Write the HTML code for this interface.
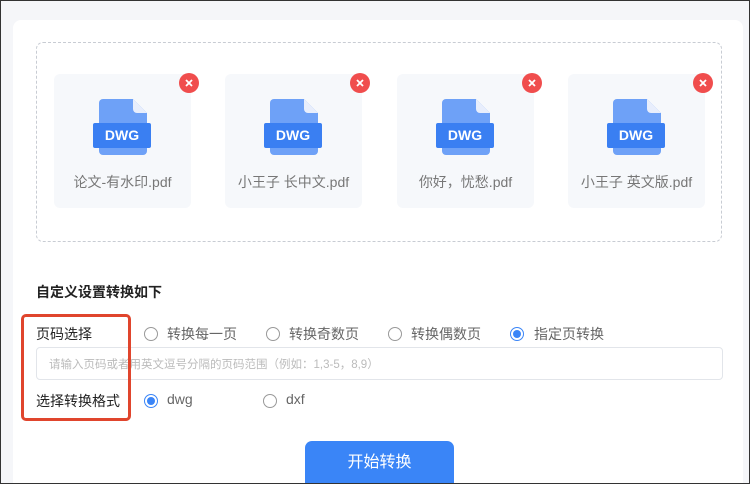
<html><head><style>
body{margin:0;width:750px;height:484px;overflow:hidden;font-family:"Liberation Sans","Noto Sans CJK SC",sans-serif;}
.frame{position:absolute;left:0;top:0;width:748px;height:482px;border:1px solid #333;background:#f5f6f9;overflow:hidden}
.card{position:absolute;left:12px;top:19px;width:730px;height:480px;background:#fff;border-radius:8px}
.dash{position:absolute;left:35px;top:41px;width:686px;height:200px;border:1px dashed #c8ccd3;border-radius:7px;box-sizing:border-box}
.item{position:absolute;top:73px;width:137px;height:134px;background:#f6f8fb;border-radius:6px}
.item .n{position:absolute;top:98px;left:0;width:100%;text-align:center;font-size:14px;color:#777}
.x{position:absolute;top:-1px;right:-8px;width:20px;height:20px;border-radius:50%;background:#f04d4d}
.t{position:absolute;font-size:14px;color:#222;white-space:nowrap}
.o{position:absolute;font-size:14px;color:#666;white-space:nowrap}
.r{position:absolute;width:12px;height:12px;border:1px solid #999;border-radius:50%}
.r.on{border-color:#3a85f7;}
.r.on:after{content:"";position:absolute;left:2px;top:2px;width:8px;height:8px;border-radius:50%;background:#3a85f7}
</style></head><body><div class="frame">
<div class="card"></div>
<div class="dash"></div>
<div class="item" style="left:53px"><svg style="position:absolute;left:38px;top:24px" width="60" height="60" viewBox="0 0 60 60"><path d="M11 1h30l14 14v38a4 4 0 0 1-4 4H11a4 4 0 0 1-4-4V5a4 4 0 0 1 4-4z" fill="#6ea1f7"/><path d="M41 1v10a4 4 0 0 0 4 4h10z" fill="#e8eefc"/><rect x="1" y="25" width="58" height="25" rx="2" fill="#3a7ff2"/><text x="30" y="42" font-size="14" font-weight="bold" fill="#fff" text-anchor="middle" font-family="Liberation Sans">DWG</text></svg><div class="n">论文-有水印.pdf</div><div class="x"><svg width="20" height="20"><path d="M7 7l6 6M13 7l-6 6" stroke="#fff" stroke-width="1.8"/></svg></div></div>
<div class="item" style="left:224px"><svg style="position:absolute;left:38px;top:24px" width="60" height="60" viewBox="0 0 60 60"><path d="M11 1h30l14 14v38a4 4 0 0 1-4 4H11a4 4 0 0 1-4-4V5a4 4 0 0 1 4-4z" fill="#6ea1f7"/><path d="M41 1v10a4 4 0 0 0 4 4h10z" fill="#e8eefc"/><rect x="1" y="25" width="58" height="25" rx="2" fill="#3a7ff2"/><text x="30" y="42" font-size="14" font-weight="bold" fill="#fff" text-anchor="middle" font-family="Liberation Sans">DWG</text></svg><div class="n">小王子 长中文.pdf</div><div class="x"><svg width="20" height="20"><path d="M7 7l6 6M13 7l-6 6" stroke="#fff" stroke-width="1.8"/></svg></div></div>
<div class="item" style="left:396px"><svg style="position:absolute;left:38px;top:24px" width="60" height="60" viewBox="0 0 60 60"><path d="M11 1h30l14 14v38a4 4 0 0 1-4 4H11a4 4 0 0 1-4-4V5a4 4 0 0 1 4-4z" fill="#6ea1f7"/><path d="M41 1v10a4 4 0 0 0 4 4h10z" fill="#e8eefc"/><rect x="1" y="25" width="58" height="25" rx="2" fill="#3a7ff2"/><text x="30" y="42" font-size="14" font-weight="bold" fill="#fff" text-anchor="middle" font-family="Liberation Sans">DWG</text></svg><div class="n">你好，忧愁.pdf</div><div class="x"><svg width="20" height="20"><path d="M7 7l6 6M13 7l-6 6" stroke="#fff" stroke-width="1.8"/></svg></div></div>
<div class="item" style="left:567px"><svg style="position:absolute;left:38px;top:24px" width="60" height="60" viewBox="0 0 60 60"><path d="M11 1h30l14 14v38a4 4 0 0 1-4 4H11a4 4 0 0 1-4-4V5a4 4 0 0 1 4-4z" fill="#6ea1f7"/><path d="M41 1v10a4 4 0 0 0 4 4h10z" fill="#e8eefc"/><rect x="1" y="25" width="58" height="25" rx="2" fill="#3a7ff2"/><text x="30" y="42" font-size="14" font-weight="bold" fill="#fff" text-anchor="middle" font-family="Liberation Sans">DWG</text></svg><div class="n">小王子 英文版.pdf</div><div class="x"><svg width="20" height="20"><path d="M7 7l6 6M13 7l-6 6" stroke="#fff" stroke-width="1.8"/></svg></div></div>

<div class="t" style="left:35px;top:281px;font-weight:bold">自定义设置转换如下</div>
<div class="t" style="left:35px;top:323px">页码选择</div>
<div class="r" style="left:143px;top:326px"></div><div class="o" style="left:166px;top:323px">转换每一页</div>
<div class="r" style="left:265px;top:326px"></div><div class="o" style="left:288px;top:323px">转换奇数页</div>
<div class="r" style="left:387px;top:326px"></div><div class="o" style="left:410px;top:323px">转换偶数页</div>
<div class="r on" style="left:509px;top:326px"></div><div class="o" style="left:533px;top:323px">指定页转换</div>
<div style="position:absolute;left:35px;top:346px;width:687px;height:33px;border:1px solid #e2e5ea;border-radius:4px;box-sizing:border-box"></div>
<div style="position:absolute;left:48px;top:355px;font-size:11.5px;color:#bbb;white-space:nowrap">请输入页码或者用英文逗号分隔的页码范围（例如：1,3-5，8,9）</div>
<div class="t" style="left:35px;top:390px">选择转换格式</div>
<div class="r on" style="left:143px;top:393px"></div><div class="o" style="left:166px;top:390px">dwg</div>
<div class="r" style="left:262px;top:393px"></div><div class="o" style="left:285px;top:390px">dxf</div>
<div style="position:absolute;left:20px;top:313px;width:110px;height:107px;border:3px solid #e0452d;border-radius:5px;box-sizing:border-box"></div>
<div style="position:absolute;left:304px;top:440px;width:149px;height:50px;background:#3a85f7;border-radius:7px;color:#fff;font-size:16px;text-align:center;line-height:44px">开始转换</div>
</div></body></html>
